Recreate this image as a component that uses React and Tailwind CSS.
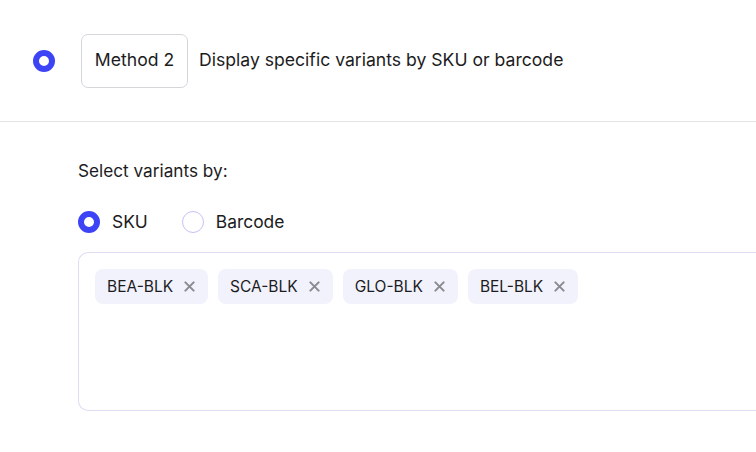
import React, { useState } from 'react';

const skus = ['BEA-BLK', 'SCA-BLK', 'GLO-BLK', 'BEL-BLK'];

const XIcon = () => (
  <svg width="11" height="11" viewBox="0 0 12 12" fill="none">
    <path d="M1.5 1.5l9 9M10.5 1.5l-9 9" stroke="#8a8a8f" strokeWidth="2.2" strokeLinecap="round" />
  </svg>
);

const Radio = ({ checked }) =>
  checked ? (
    <span className="w-[22px] h-[22px] rounded-full border-[6px] border-[#3d44f6] bg-white shrink-0" />
  ) : (
    <span className="w-[22px] h-[22px] rounded-full border-[1.5px] border-[#c3c3f7] bg-white shrink-0" />
  );

export default function App() {
  const [mode, setMode] = useState('sku');
  const [tags, setTags] = useState(skus);

  return (
    <div className="w-[756px] h-[452px] bg-white overflow-hidden text-[#1c1c1e]" style={{ fontFamily: 'Inter, "Noto Sans", sans-serif' }}>
      {/* Method header */}
      <div className="h-[122px] flex items-center pl-[33px] border-b border-[#e3e3e5]">
        <Radio checked />
        <div className="ml-[26px] h-[54px] w-[107px] justify-center flex items-center border border-[#d4d6da] rounded-[7px] text-[17.6px]">
          Method 2
        </div>
        <span className="ml-[11px] text-[17.6px]">Display specific variants by SKU or barcode</span>
      </div>

      {/* Variant selection */}
      <div className="pl-[78px] pt-[37px]">
        <p className="text-[17.2px] leading-[24px]">Select variants by:</p>

        <div className="mt-[26px] flex items-center text-[17.4px]">
          <button className="flex items-center gap-[12px]" onClick={() => setMode('sku')}>
            <Radio checked={mode === 'sku'} />
            <span>SKU</span>
          </button>
          <button className="ml-[34px] flex items-center gap-[12px]" onClick={() => setMode('barcode')}>
            <Radio checked={mode === 'barcode'} />
            <span>Barcode</span>
          </button>
        </div>

        <div className="mt-[17px] h-[159px] border-[1.5px] border-r-0 border-[#dcdcf3] rounded-l-[10px] pl-[16px] pt-[16px]">
          <div className="flex gap-[10px]">
            {tags.map((t) => (
              <div key={t} className="h-[35px] pl-[12px] pr-[13px] flex items-center gap-[11px] bg-[#f2f2fd] rounded-[8px] text-[15.5px]">
                <span>{t}</span>
                <button onClick={() => setTags(tags.filter((x) => x !== t))}>
                  <XIcon />
                </button>
              </div>
            ))}
          </div>
        </div>
      </div>
    </div>
  );
}
